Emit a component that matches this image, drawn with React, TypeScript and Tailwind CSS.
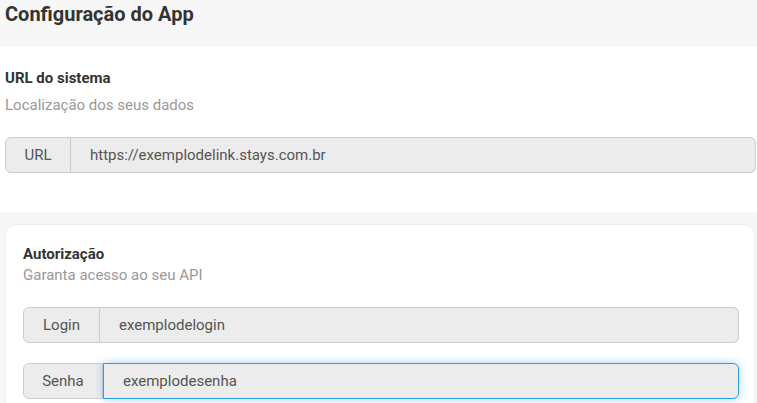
import React from "react";

function Group({ label, value, labelW, focused, textPl }: { label: string; value: string; labelW: string; focused?: boolean; textPl: string }) {
  return (
    <div className="flex h-[36px] w-full">
      <div className={`${labelW} flex items-center justify-center shrink-0 bg-[#ececec] border border-[#cccccc] rounded-l-[6px] text-[15px] text-[#555555]`}>
        {label}
      </div>
      <div
        className={`flex-1 flex items-center bg-[#ececec] rounded-r-[6px] text-[15px] text-[#555555] ${textPl} ${
          focused
            ? "border border-[#2b9fd6] shadow-[0_0_8px_rgba(102,175,233,0.6)]"
            : "border border-l-0 border-[#cccccc]"
        }`}
      >
        {value}
      </div>
    </div>
  );
}

export default function App() {
  return (
    <div className="w-[757px] h-[403px] overflow-hidden bg-white font-['Roboto',sans-serif]">
      <div className="h-[47px] bg-[#f7f7f7] px-[5px] pt-[1px]">
        <h1 className="text-[20px] font-bold text-[#333333] leading-[26px]">Configuração do App</h1>
      </div>
      <div className="pl-[5px] pr-[1px] pt-[21px] h-[165px]">
        <div className="text-[15px] font-bold text-[#333333] leading-[20px]">URL do sistema</div>
        <div className="text-[15px] text-[#999999] leading-[20px] mt-[7px]">Localização dos seus dados</div>
        <div className="mt-[22px]">
          <Group label="URL" value="https://exemplodelink.stays.com.br" labelW="w-[66px]" textPl="pl-[19px]" />
        </div>
      </div>
      <div className="bg-[#f7f7f7] pt-[12px] pl-[5px] pr-[2px]">
        <div className="bg-white rounded-t-[10px] border border-b-0 border-[#eeeeee] pl-[17px] pr-[15px] pt-[19px] pb-[10px]">
          <div className="text-[15px] font-bold text-[#333333] leading-[20px]">Autorização</div>
          <div className="text-[15px] text-[#999999] leading-[20px] mt-[1px]">Garanta acesso ao seu API</div>
          <div className="mt-[22px]">
            <Group label="Login" value="exemplodelogin" labelW="w-[77px]" textPl="pl-[19px]" />
          </div>
          <div className="mt-[20px]">
            <Group label="Senha" value="exemplodesenha" labelW="w-[80px]" focused textPl="pl-[19px]" />
          </div>
        </div>
      </div>
    </div>
  );
}
